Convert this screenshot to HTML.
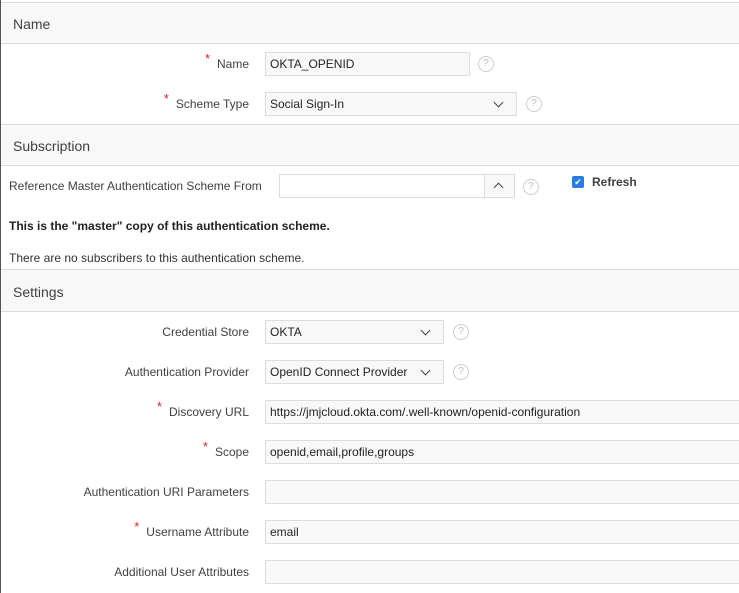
<!DOCTYPE html>
<html><head><style>
body{margin:0;width:739px;height:593px;background:#fff;font-family:"Liberation Sans",sans-serif;color:#333;position:relative;overflow:hidden}
.a{position:absolute}
.hd{position:absolute;left:1px;right:0;background:#f8f8f8;border-top:1px solid #dcdcdc;border-bottom:1px solid #dcdcdc;font-size:14px;color:#404040}
.hd span{position:absolute;left:12px}
.lb{position:absolute;right:490px;font-size:12px;color:#404040;text-align:right;white-space:nowrap}
.req:before{content:"*";color:#e0202a;font-size:13px;position:absolute;left:-12px;top:-6px}
.in{position:absolute;height:22px;border:1px solid #dcdcdc;background:#f8f8f8;font-size:12px;line-height:22px;padding-left:4px;box-sizing:border-box;color:#222}
.sel:after{content:"";position:absolute;right:14px;top:6px;width:6px;height:6px;border-right:1.3px solid #444;border-bottom:1.3px solid #444;transform:rotate(45deg)}
.hp{position:absolute;width:14px;height:14px;border:1px solid #ccc;border-radius:50%;font-size:10px;color:#bbb;text-align:center;line-height:14px}
</style></head><body>
<div class="a" style="left:0;top:0;width:1px;height:593px;background:#555"></div>
<div class="hd" style="top:2px;height:40px"><span style="top:13px">Name</span></div>
<div class="lb req" style="top:57px">Name</div>
<div class="in" style="left:265px;top:52px;width:205px;height:24px;line-height:22px;font-size:12px">OKTA_OPENID</div>
<div class="hp" style="left:478px;top:56px">?</div>
<div class="lb req" style="top:97px">Scheme Type</div>
<div class="in sel" style="left:265px;top:92px;width:252px;height:24px">Social Sign-In</div>
<div class="hp" style="left:526px;top:96px">?</div>

<div class="hd" style="top:124px;height:40px"><span style="top:13px">Subscription</span></div>
<div class="a" style="left:9px;top:179px;font-size:12px;color:#404040">Reference Master Authentication Scheme From</div>
<div class="in" style="left:279px;top:174px;width:206px;height:24px;background:#fff"></div>
<div class="in" style="left:484px;top:174px;width:31px;height:24px"><div class="a" style="left:10px;top:9px;width:6px;height:6px;border-left:1.3px solid #444;border-top:1.3px solid #444;transform:rotate(45deg)"></div></div>
<div class="hp" style="left:523px;top:179px">?</div>
<div class="a" style="left:572px;top:176px;width:12px;height:12px;background:#2a7de1;border-radius:2px;color:#fff;font-size:9px;text-align:center;line-height:12px">✔</div>
<div class="a" style="left:592px;top:175px;font-size:12px;font-weight:bold;color:#404040">Refresh</div>
<div class="a" style="left:9px;top:219px;font-size:12px;font-weight:bold;color:#222">This is the "master" copy of this authentication scheme.</div>
<div class="a" style="left:9px;top:251px;font-size:12px;color:#333">There are no subscribers to this authentication scheme.</div>

<div class="hd" style="top:269px;height:41px"><span style="top:14px">Settings</span></div>
<div class="lb" style="top:325px">Credential Store</div>
<div class="in sel" style="left:265px;top:320px;width:179px;height:24px">OKTA</div>
<div class="hp" style="left:453px;top:324px">?</div>
<div class="lb" style="top:365px">Authentication Provider</div>
<div class="in sel" style="left:265px;top:360px;width:179px;height:24px">OpenID Connect Provider</div>
<div class="hp" style="left:453px;top:364px">?</div>
<div class="lb req" style="top:405px">Discovery URL</div>
<div class="in" style="left:265px;top:400px;width:480px;height:24px">https://jmjcloud.okta.com/.well-known/openid-configuration</div>
<div class="lb req" style="top:445px">Scope</div>
<div class="in" style="left:265px;top:440px;width:480px;height:24px">openid,email,profile,groups</div>
<div class="lb" style="top:485px">Authentication URI Parameters</div>
<div class="in" style="left:265px;top:480px;width:480px;height:24px"></div>
<div class="lb req" style="top:525px">Username Attribute</div>
<div class="in" style="left:265px;top:520px;width:480px;height:24px">email</div>
<div class="lb" style="top:565px">Additional User Attributes</div>
<div class="in" style="left:265px;top:560px;width:480px;height:24px"></div>
</body></html>
